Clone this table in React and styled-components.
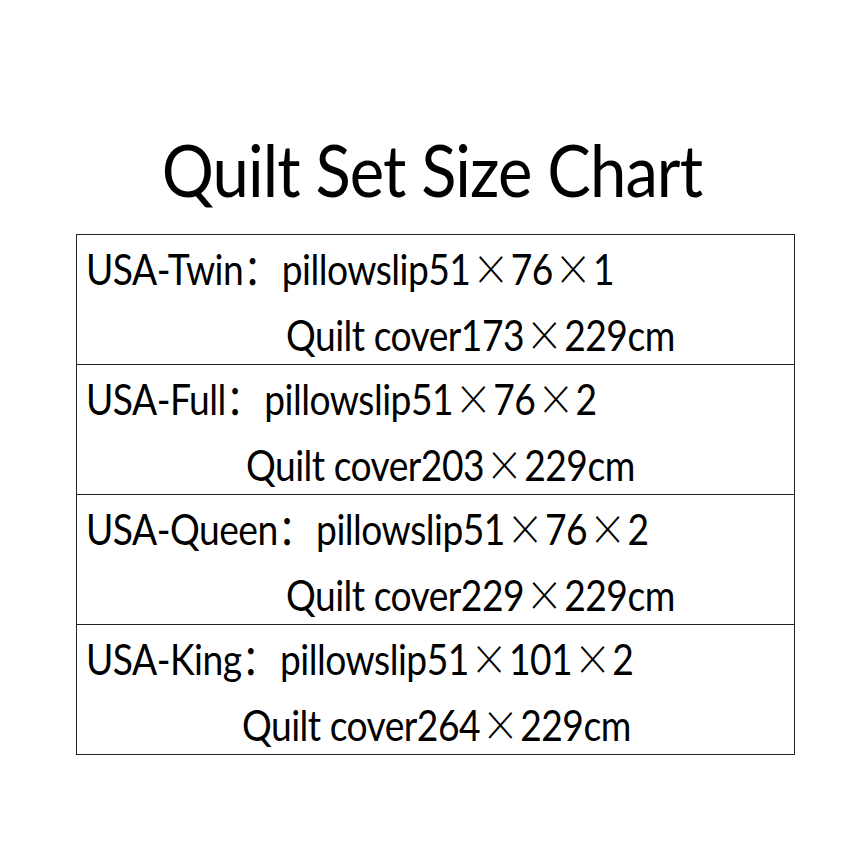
import React from "react";
import styled, { createGlobalStyle } from "styled-components";

const sizes = [
	{ name: "USA-Twin", pillow: ["51", "76", "1"], cover: ["173", "229cm"], indent: 200 },
	{ name: "USA-Full", pillow: ["51", "76", "2"], cover: ["203", "229cm"], indent: 160 },
	{ name: "USA-Queen", pillow: ["51", "76", "2"], cover: ["229", "229cm"], indent: 200 },
	{ name: "USA-King", pillow: ["51", "101", "2"], cover: ["264", "229cm"], indent: 156 },
];

const App = () => {
	return (
		<Page>
			<GlobalStyle />
			<Title>Quilt Set Size Chart</Title>
			<Table>
				{sizes.map((s) => (
					<Row key={s.name}>
						<Line>
							{s.name}
							<Colon>：</Colon>
							pillowslip{s.pillow[0]}
							<Times>×</Times>
							{s.pillow[1]}
							<Times>×</Times>
							{s.pillow[2]}
						</Line>
						<Line indent={s.indent}>
							Quilt cover{s.cover[0]}
							<Times>×</Times>
							{s.cover[1]}
						</Line>
					</Row>
				))}
			</Table>
		</Page>
	);
};

export default App;

const GlobalStyle = createGlobalStyle`
	body {
		margin: 0;
		background: #fff;
		font-family: Lato, "Noto Sans", sans-serif;
		color: #000;
	}
`;

const Page = styled.div`
	width: 867px;
	height: 867px;
	padding-top: 124px;
	box-sizing: border-box;
	display: flex;
	flex-direction: column;
`;

const Title = styled.h1`
	margin: 0 0 0 -3px;
	font-weight: 400;
	font-size: 72px;
	line-height: 90px;
	text-align: center;
	letter-spacing: -1px;
	transform: scaleX(0.905);
`;

const Table = styled.div`
	margin: 20px 0 0 76px;
	width: 717px;
	border: 1px solid #222;
	display: flex;
	flex-direction: column;
`;

const Row = styled.div`
	height: 130px;
	display: flex;
	flex-direction: column;
	align-items: flex-start;
	padding: 0 0 0 9px;
	box-sizing: border-box;
	& + & {
		border-top: 1px solid #222;
	}
	&:first-child {
		height: 129px;
	}
`;

const Line = styled.div`
	font-size: 42px;
	line-height: 63px;
	white-space: nowrap;
	letter-spacing: -0.6px;
	margin-left: ${(p) => p.indent || 0}px;
	transform: scaleX(0.886);
	transform-origin: left center;
`;

const Colon = styled.span`
	font-family: "Noto Sans CJK SC", sans-serif;
	margin-right: 2px;
`;

const Times = styled.span`
	font-family: "Noto Sans CJK SC", sans-serif;
	font-weight: 300;
	margin: 0 2px;
`;
